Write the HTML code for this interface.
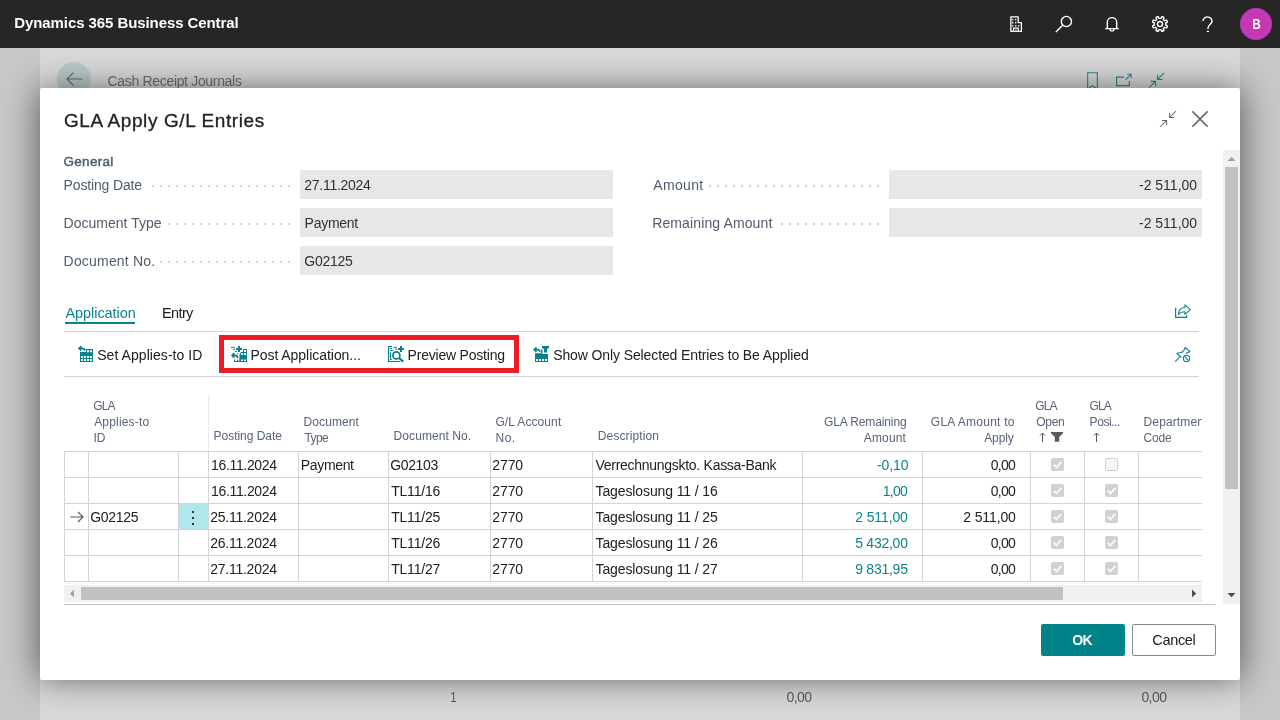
<!DOCTYPE html>
<html lang="en">
<head>
<meta charset="utf-8">
<title>GLA Apply G/L Entries - Dynamics 365 Business Central</title>
<style>
*{box-sizing:border-box;margin:0;padding:0}
html,body{width:1280px;height:720px;overflow:hidden}
body{position:relative;background:#c8c8c8;font-family:"Liberation Sans",sans-serif;font-size:14px;color:#212121}
.t{position:absolute;white-space:pre;line-height:1}
.abs{position:absolute}
#topbar{position:absolute;left:0;top:0;width:1280px;height:48px;background:#262626}
#page{position:absolute;left:40px;top:48px;width:1200px;height:672px;background:#d7d7d7;overflow:hidden}
.mg{position:absolute;top:48px;width:40px;height:672px;overflow:hidden}
.caster{position:absolute;width:1200px;height:592px;border-radius:2px}
#dialog{position:absolute;left:40px;top:88px;width:1200px;height:592px;background:#fff;border-radius:2px}
#layer,#layer2,#topbar{will-change:transform}
#layer{position:absolute;left:0;top:0;width:1280px;height:720px}
.field{position:absolute;height:29px;width:313px;background:#e6e7e8}
.dots{position:absolute;height:2px;background-image:linear-gradient(90deg,#d2d2d2 0,#d2d2d2 2px,transparent 2px);background-size:8px 2px;background-repeat:repeat-x}
.hl{position:absolute;height:1px;background:#d3d4da}
.vl{position:absolute;width:1px;background:#d3d4da}
.cb{position:absolute;width:13px;height:13px;border-radius:2px;background:#d1d1d1}
.cb.off{background:#f6f6f6;border:1px solid #d0d0d0}
.cb svg{position:absolute;left:0;top:0}
svg{position:absolute;overflow:visible}
</style>
</head>
<body>
<div id="topbar">
<!-- company icon -->
<svg style="left:1009px;top:15px" width="14" height="18" viewBox="0 0 14 18"><path d="M1.85 1.85H9.2V7.6h3.2v8.8H1.85z" fill="none" stroke="#fff" stroke-width="1.3" stroke-linejoin="round"/><g fill="#e6e6e6"><circle cx="3.7" cy="4.6" r="0.85"/><circle cx="6.7" cy="4.6" r="0.85"/><circle cx="3.7" cy="7.7" r="0.85"/><circle cx="6.7" cy="7.7" r="0.85"/><circle cx="3.7" cy="10.8" r="0.85"/><circle cx="6.7" cy="10.8" r="0.85"/><circle cx="9.7" cy="10.8" r="0.85"/></g><path d="M4.5 16.4V13.2h4.8v3.2" fill="none" stroke="#fff" stroke-width="1.2" stroke-linejoin="round"/><path d="M6.9 14.2v2" stroke="#bbb" stroke-width="1.2"/></svg>
<!-- search -->
<svg style="left:1054px;top:14px" width="20" height="20" viewBox="0 0 20 20"><circle cx="12.4" cy="7.5" r="5.1" fill="none" stroke="#fff" stroke-width="1.4"/><path d="M8.7 11.2L1.9 18" stroke="#fff" stroke-width="1.5" fill="none"/></svg>
<!-- bell -->
<svg style="left:1104px;top:15px" width="16" height="18" viewBox="0 0 16 18"><path d="M1.2 13.6h13.6M3.3 13.6V7a4.7 4.4 0 0 1 9.4 0v6.6" fill="none" stroke="#fff" stroke-width="1.4"/><path d="M5.9 14a2.1 2 0 0 0 4.2 0" fill="none" stroke="#fff" stroke-width="1.2"/></svg>
<!-- gear -->
<svg style="left:1150px;top:14px" width="20" height="20" viewBox="-10 -10 20 20"><path d="M5.63 0.89L7.46 1.91L6.63 3.92L4.61 3.35L3.35 4.61L3.92 6.63L1.91 7.46L0.89 5.63L-0.89 5.63L-1.91 7.46L-3.92 6.63L-3.35 4.61L-4.61 3.35L-6.63 3.92L-7.46 1.91L-5.63 0.89L-5.63 -0.89L-7.46 -1.91L-6.63 -3.92L-4.61 -3.35L-3.35 -4.61L-3.92 -6.63L-1.91 -7.46L-0.89 -5.63L0.89 -5.63L1.91 -7.46L3.92 -6.63L3.35 -4.61L4.61 -3.35L6.63 -3.92L7.46 -1.91L5.63 -0.89Z" fill="none" stroke="#fff" stroke-width="1.45" stroke-linejoin="round"/><circle r="2.5" fill="none" stroke="#fff" stroke-width="1.4"/></svg>
<!-- help -->
<svg style="left:1200px;top:14px" width="16" height="20" viewBox="0 0 16 20"><path d="M3 7a4.5 4.1 0 1 1 7.3 3.2C8.3 11.9 7.8 12.8 7.8 14.9" fill="none" stroke="#fff" stroke-width="1.45"/><rect x="6.7" y="16.7" width="2.3" height="1.4" rx="0.5" fill="#fff"/></svg>
<div class="abs" style="left:1240px;top:8px;width:32px;height:32px;border-radius:50%;background:#c239b3"></div>
<span class="t" style="left:14.2px;top:14.8px;font-size:15px;color:#ffffff;font-weight:700;letter-spacing:-0.08px;">Dynamics 365 Business Central</span>
<span class="t" style="left:1251.7px;top:16.9px;font-size:14.2px;color:#ffffff;font-weight:700;transform:scaleX(0.83);transform-origin:1px 0;">B</span>
</div>
<div class="mg" style="left:0"><div class="caster" style="left:40px;top:40px;box-shadow:0 0 36px rgba(0,0,0,.6)"></div></div>
<div class="mg" style="left:1240px"><div class="caster" style="left:-1200px;top:40px;box-shadow:0 0 36px rgba(0,0,0,.6)"></div></div>
<div id="page">
<div class="abs" style="left:17px;top:14px;width:34px;height:34px;border-radius:50%;background:#b8c8c9"></div>
<svg style="left:26px;top:24px" width="17" height="14" viewBox="0 0 17 14"><path d="M16.2 7H1M7.4 0.6L1 7l6.4 6.4" fill="none" stroke="#6a6a6a" stroke-width="1.2"/></svg>
<!-- bookmark / open in new window / collapse -->
<svg style="left:1047px;top:24px" width="12" height="18" viewBox="0 0 12 18"><path d="M0.7 0.7h9.6v16.6L5.5 13.6 0.7 17.3z" fill="none" stroke="#2c858b" stroke-width="1.1"/></svg>
<svg style="left:1075px;top:25px" width="18" height="14" viewBox="0 0 18 14"><path d="M9 4.2H1.6v8.4h12.8V8" fill="none" stroke="#2c858b" stroke-width="1.2"/><path d="M10.5 6.6l5.4-5M12 1.2h4.1v4" fill="none" stroke="#2c858b" stroke-width="1.1"/></svg>
<svg style="left:1108px;top:24px" width="18" height="18" viewBox="0 0 18 18"><path d="M16 1L9.6 7.4M9.6 2.6v4.9h4.9M1.2 15.7l6.3-6.3M2.8 9.4h4.8v4.8" fill="none" stroke="#2c858b" stroke-width="1.1"/></svg>
</div>
<div id="layer">
<span class="t" style="left:107.6px;top:73.7px;font-size:14px;color:#6a6f7b;letter-spacing:-0.33px;">Cash Receipt Journals</span>
<span class="t" style="left:450.1px;top:689.6px;font-size:14px;color:#5a5a5a;transform:scaleX(0.82);transform-origin:1px 0;">1</span>
<span class="t" style="left:786.6px;top:689.6px;font-size:14px;color:#5a5a5a;letter-spacing:-0.60px;">0,00</span>
<span class="t" style="left:1141.4px;top:689.6px;font-size:14px;color:#5a5a5a;letter-spacing:-0.57px;">0,00</span>
</div>
<div class="abs" style="left:40px;top:48px;width:1200px;height:672px;overflow:hidden"><div class="caster" style="left:0;top:40px;box-shadow:0 0 30px rgba(0,0,0,.5)"></div></div>
<div id="dialog"></div>
<div id="layer2" class="abs" style="left:0;top:0;width:1280px;height:720px">
<!-- dialog header icons -->
<svg style="left:1159px;top:110px" width="18" height="18" viewBox="0 0 18 18"><path d="M17 1L10.6 7.4M10.6 2.8v4.7h4.7M1 17l6.6-6.6M2.9 10.4h4.7v4.7" fill="none" stroke="#6a6a6a" stroke-width="1.05"/></svg>
<svg style="left:1192px;top:111px" width="16" height="16" viewBox="0 0 16 16"><path d="M0.4 0.4l15.2 15.2M15.6 0.4L0.4 15.6" fill="none" stroke="#666" stroke-width="1.5"/></svg>
<!-- fields -->
<div class="field" style="left:300px;top:170px"></div>
<div class="field" style="left:300px;top:208px"></div>
<div class="field" style="left:300px;top:246px"></div>
<div class="field" style="left:889px;top:170px"></div>
<div class="field" style="left:889px;top:208px"></div>
<div class="dots" style="left:152px;top:185px;width:138px"></div>
<div class="dots" style="left:168px;top:223px;width:122px"></div>
<div class="dots" style="left:160px;top:261px;width:130px"></div>
<div class="dots" style="left:709px;top:185px;width:170px"></div>
<div class="dots" style="left:781px;top:223px;width:98px"></div>
<!-- vertical scrollbar -->
<div class="abs" style="left:1223px;top:150px;width:17px;height:454px;background:#f1f1f1"></div>
<div class="abs" style="left:1225px;top:167px;width:13px;height:322px;background:#c1c1c1"></div>
<svg style="left:1227px;top:156px" width="9" height="6" viewBox="0 0 9 6"><path d="M0.5 5L4.5 0.8 8.5 5z" fill="#a3a3a3"/></svg>
<svg style="left:1227px;top:592px" width="9" height="6" viewBox="0 0 9 6"><path d="M0.5 1L4.5 5.2 8.5 1z" fill="#505050"/></svg>
<!-- tabs -->
<div class="abs" style="left:65px;top:322px;width:70px;height:2px;background:#0a848c"></div>
<div class="hl" style="left:64px;top:331px;width:1135px"></div>
<div class="hl" style="left:64px;top:376px;width:1135px"></div>
<!-- share icon -->
<svg style="left:1174px;top:304px" width="18" height="15" viewBox="0 0 18 15"><path d="M1.6 3.8v9.5h11V11.2" fill="none" stroke="#0a848c" stroke-width="1.2"/><path d="M4.3 10.4C4.7 6.2 7.4 3.6 11 3.3V0.8l5.4 4.8L11 10.4V7.8C8 7.8 5.9 8.5 4.3 10.4z" fill="none" stroke="#0a848c" stroke-width="1.1" stroke-linejoin="round"/></svg>
<!-- unpin icon -->
<svg style="left:1174px;top:346px" width="18" height="17" viewBox="0 0 18 17"><path d="M7.6 11.7L3 7.5c1.6-0.9 3.2-1.1 4.7-1l2.7-2.8 0.8-2.3 4.7 4.1c-1 0.8-1.8 0.9-2.6 1l-1.3 1.1M6 10.5l-4.8 5.2" fill="none" stroke="#0a848c" stroke-width="1.1" stroke-linejoin="round"/><circle cx="12.5" cy="12.4" r="3.1" fill="none" stroke="#0a848c" stroke-width="1.1"/><path d="M10.3 10.2l4.4 4.4" stroke="#0a848c" stroke-width="1.1"/></svg>
<!-- toolbar icons -->
<!-- Set Applies-to ID icon -->
<svg style="left:77px;top:345px" width="17" height="18" viewBox="0 0 17 18"><path d="M3 7.1h6V4h7v13H3z" fill="#03828b"/><path d="M10 5.3h2v1.9h-2zM13 5.3h2v1.9h-2zM4 11h2v2H4zM7 11h2v2H7zM10 11h2v2h-2zM13 11h2v2h-2zM4 14h2v2H4zM7 14h2v2H7zM10 14h2v2h-2zM13 14h2v2h-2z" fill="#fff"/><path d="M7.8 5.8C7.8 4 6.8 3.4 5.2 3.4H2.4M4.3 1.2L2 3.4l2.3 2.2" fill="none" stroke="#03828b" stroke-width="1.6"/></svg>
<!-- Post Application icon -->
<svg style="left:231px;top:345px" width="17" height="18" viewBox="0 0 17 18"><path d="M12 4h4v13H3v-2.6h1v1.5h2v-1.5h1v1.5h1.2L8.6 10V8.4h1V7H12z" fill="#03828b"/><path d="M13 5.1h2V7h-2zM10 8.1h2V10h-2zM13 8.1h2V10h-2zM10 14.4h2v1.7h-2zM13 14.4h2v1.7h-2z" fill="#fff"/><path d="M8 0.9v6M5 3.9h6" stroke="#03828b" stroke-width="2" fill="none"/><path d="M0 2.4h4M2 4.4h2M4 6.4h2" stroke="#03828b" stroke-width="1" fill="none"/><circle cx="6.6" cy="8.5" r="0.6" fill="#03828b"/><path d="M1.6 10.4H4.2c1.6 0 2.4 1 2.4 2.6M3.4 8.2L1.1 10.4l2.3 2.2" fill="none" stroke="#03828b" stroke-width="1.6"/></svg>
<!-- Preview Posting icon -->
<svg style="left:388px;top:345px" width="17" height="18" viewBox="0 0 17 18"><path d="M4 1.5H0.6v15h11" fill="none" stroke="#03828b" stroke-width="1.2"/><path d="M2 3.4h2M5.3 2.4H9M7 4.4h2M2 5.4h3.5M2.5 7.3v7.2H4" stroke="#03828b" stroke-width="1" fill="none"/><circle cx="8.4" cy="10.4" r="3.5" fill="#fff" stroke="#03828b" stroke-width="1.7"/><path d="M11 13l4.2 3.6" stroke="#03828b" stroke-width="2.2" fill="none"/><path d="M13 0.9v6M10 3.9h6" stroke="#03828b" stroke-width="2" fill="none"/></svg>
<!-- Show Only Selected icon -->
<svg style="left:533px;top:345px" width="17" height="18" viewBox="0 0 17 18"><path d="M2 8.2h7.5V9H15v8H2z" fill="#03828b"/><path d="M3 14h2v2H3zM6 14h2v2H6zM9 14h2v2H9zM12 14h2v2h-2z" fill="#fff"/><path d="M9 1h7v1.6l-2 2v3h-3v-3l-2-2z" fill="#03828b"/><path d="M1.6 4.6h2.8c1.6 0 2.4 0.8 2.4 2.4M3.5 2.4L1.2 4.6l2.3 2.2" fill="none" stroke="#03828b" stroke-width="1.6"/><path d="M8.8 4.3v4.2" stroke="#03828b" stroke-width="1.4" fill="none"/></svg>

<!-- red highlight -->
<div class="abs" style="left:219px;top:335px;width:300px;height:38px;border:5px solid #ed1c24"></div>
<!-- table -->
<div id="grid" class="abs" style="left:64px;top:395px;width:1138px;height:187px;overflow:hidden">
<div class="vl" style="left:144px;top:0;height:56px;background:#e9eaec"></div>
<div class="hl" style="left:0;top:56px;width:1138px"></div>
<div class="hl" style="left:0;top:82px;width:1138px"></div>
<div class="hl" style="left:0;top:108px;width:1138px"></div>
<div class="hl" style="left:0;top:134px;width:1138px"></div>
<div class="hl" style="left:0;top:160px;width:1138px"></div>
<div class="hl" style="left:0;top:186px;width:1138px"></div>
<div class="vl" style="left:0;top:56px;height:131px"></div>
<div class="vl" style="left:24px;top:56px;height:131px"></div>
<div class="vl" style="left:114px;top:56px;height:131px"></div>
<div class="vl" style="left:144px;top:56px;height:131px"></div>
<div class="vl" style="left:234px;top:56px;height:131px"></div>
<div class="vl" style="left:324px;top:56px;height:131px"></div>
<div class="vl" style="left:426px;top:56px;height:131px"></div>
<div class="vl" style="left:528px;top:56px;height:131px"></div>
<div class="vl" style="left:738px;top:56px;height:131px"></div>
<div class="vl" style="left:858px;top:56px;height:131px"></div>
<div class="vl" style="left:966px;top:56px;height:131px"></div>
<div class="vl" style="left:1020px;top:56px;height:131px"></div>
<div class="vl" style="left:1074px;top:56px;height:131px"></div>
<div class="abs" style="left:115px;top:109px;width:29px;height:25px;background:#b1e6ea"></div>
<div class="abs" style="left:128px;top:116px;width:2px;height:2px;background:#333;box-shadow:0 6px 0 #333,0 12px 0 #333"></div>
</div>
<div class="abs" style="left:0;top:0;width:1202px;height:720px;overflow:hidden">
<span class="t" style="left:1143.6px;top:415.7px;font-size:12px;color:#566379;letter-spacing:0.11px;">Departmen</span>
</div>
<!-- row arrow -->
<svg style="left:70px;top:511px" width="14" height="12" viewBox="0 0 14 12"><path d="M0.3 6h12.5M8 1l5 5-5 5" fill="none" stroke="#555" stroke-width="1.1"/></svg>
<!-- sort arrows + filter -->
<svg style="left:1039px;top:432px" width="7" height="10" viewBox="0 0 7 10"><path d="M3.5 10V1M1 3.6L3.5 1l2.5 2.6" fill="none" stroke="#555" stroke-width="1"/></svg>
<svg style="left:1093px;top:432px" width="7" height="10" viewBox="0 0 7 10"><path d="M3.5 10V1M1 3.6L3.5 1l2.5 2.6" fill="none" stroke="#555" stroke-width="1"/></svg>
<svg style="left:1051px;top:432px" width="12" height="10" viewBox="0 0 12 10"><path d="M0 0h12v1.2L8.2 5v4.8H3.8V5L0 1.2z" fill="#5a5a5a"/></svg>
<!-- checkboxes -->
<div class="cb" style="left:1051px;top:458px"><svg width="13" height="13" viewBox="0 0 13 13"><path d="M2.8 6.8l2.6 2.6 5-5.6" fill="none" stroke="#f8f8f8" stroke-width="2"/></svg></div>
<div class="cb off" style="left:1105px;top:458px"></div>
<div class="cb" style="left:1051px;top:484px"><svg width="13" height="13" viewBox="0 0 13 13"><path d="M2.8 6.8l2.6 2.6 5-5.6" fill="none" stroke="#f8f8f8" stroke-width="2"/></svg></div>
<div class="cb" style="left:1105px;top:484px"><svg width="13" height="13" viewBox="0 0 13 13"><path d="M2.8 6.8l2.6 2.6 5-5.6" fill="none" stroke="#f8f8f8" stroke-width="2"/></svg></div>
<div class="cb" style="left:1051px;top:510px"><svg width="13" height="13" viewBox="0 0 13 13"><path d="M2.8 6.8l2.6 2.6 5-5.6" fill="none" stroke="#f8f8f8" stroke-width="2"/></svg></div>
<div class="cb" style="left:1105px;top:510px"><svg width="13" height="13" viewBox="0 0 13 13"><path d="M2.8 6.8l2.6 2.6 5-5.6" fill="none" stroke="#f8f8f8" stroke-width="2"/></svg></div>
<div class="cb" style="left:1051px;top:536px"><svg width="13" height="13" viewBox="0 0 13 13"><path d="M2.8 6.8l2.6 2.6 5-5.6" fill="none" stroke="#f8f8f8" stroke-width="2"/></svg></div>
<div class="cb" style="left:1105px;top:536px"><svg width="13" height="13" viewBox="0 0 13 13"><path d="M2.8 6.8l2.6 2.6 5-5.6" fill="none" stroke="#f8f8f8" stroke-width="2"/></svg></div>
<div class="cb" style="left:1051px;top:562px"><svg width="13" height="13" viewBox="0 0 13 13"><path d="M2.8 6.8l2.6 2.6 5-5.6" fill="none" stroke="#f8f8f8" stroke-width="2"/></svg></div>
<div class="cb" style="left:1105px;top:562px"><svg width="13" height="13" viewBox="0 0 13 13"><path d="M2.8 6.8l2.6 2.6 5-5.6" fill="none" stroke="#f8f8f8" stroke-width="2"/></svg></div>
<!-- horizontal scrollbar -->
<div class="abs" style="left:64px;top:585px;width:1138px;height:17px;background:#f1f1f1"></div>
<div class="abs" style="left:81px;top:587px;width:982px;height:13px;background:#c1c1c1"></div>
<svg style="left:69px;top:589px" width="6" height="9" viewBox="0 0 6 9"><path d="M5 0.5L0.8 4.5 5 8.5z" fill="#a3a3a3"/></svg>
<svg style="left:1191px;top:589px" width="6" height="9" viewBox="0 0 6 9"><path d="M1 0.5L5.2 4.5 1 8.5z" fill="#505050"/></svg>
<div class="hl" style="left:64px;top:583px;width:1138px;background:#f6f7f9"></div>
<div class="hl" style="left:64px;top:604px;width:1152px;background:#c8c8c8"></div>
<!-- buttons -->
<div class="abs" style="left:1041px;top:624px;width:84px;height:32px;border-radius:2px;background:#00848a"></div>
<div class="abs" style="left:1132px;top:624px;width:84px;height:32px;border-radius:2px;background:#fff;border:1px solid #8a8a8a"></div>
<span class="t" style="left:63.9px;top:111.1px;font-size:19px;color:#212121;-webkit-text-stroke:0.3px #212121;letter-spacing:0.60px;">GLA Apply G/L Entries</span>
<span class="t" style="left:63.5px;top:155.3px;font-size:13.5px;color:#505c6d;-webkit-text-stroke:0.45px #505c6d;letter-spacing:0.30px;">General</span>
<span class="t" style="left:63.6px;top:177.7px;font-size:14px;color:#505c6d;letter-spacing:-0.15px;">Posting Date</span>
<span class="t" style="left:63.6px;top:215.7px;font-size:14px;color:#505c6d;letter-spacing:0.01px;">Document Type</span>
<span class="t" style="left:63.6px;top:253.7px;font-size:14px;color:#505c6d;letter-spacing:0.19px;">Document No.</span>
<span class="t" style="left:653.2px;top:177.7px;font-size:14px;color:#505c6d;letter-spacing:0.36px;">Amount</span>
<span class="t" style="left:652.2px;top:215.7px;font-size:14px;color:#505c6d;letter-spacing:0.12px;">Remaining Amount</span>
<span class="t" style="left:304.3px;top:177.8px;font-size:14px;color:#323130;letter-spacing:-0.27px;">27.11.2024</span>
<span class="t" style="left:304.6px;top:215.8px;font-size:14px;color:#323130;letter-spacing:-0.27px;">Payment</span>
<span class="t" style="left:304.3px;top:253.8px;font-size:14px;color:#323130;letter-spacing:-0.26px;">G02125</span>
<span class="t" style="left:1139.0px;top:177.8px;font-size:14px;color:#323130;">-2 511,00</span>
<span class="t" style="left:1139.0px;top:215.8px;font-size:14px;color:#323130;">-2 511,00</span>
<span class="t" style="left:65.4px;top:306.1px;font-size:14.5px;color:#0a848c;letter-spacing:-0.05px;">Application</span>
<span class="t" style="left:162.0px;top:306.1px;font-size:14.5px;color:#212121;letter-spacing:-0.62px;">Entry</span>
<span class="t" style="left:97.2px;top:347.8px;font-size:14px;color:#212121;letter-spacing:0.06px;">Set Applies-to ID</span>
<span class="t" style="left:250.4px;top:347.8px;font-size:14px;color:#212121;letter-spacing:-0.04px;">Post Application...</span>
<span class="t" style="left:407.6px;top:347.8px;font-size:14px;color:#212121;letter-spacing:-0.21px;">Preview Posting</span>
<span class="t" style="left:553.2px;top:347.8px;font-size:14px;color:#212121;letter-spacing:-0.11px;">Show Only Selected Entries to Be Applied</span>
<span class="t" style="left:93.2px;top:399.7px;font-size:12px;color:#566379;letter-spacing:-0.88px;">GLA</span>
<span class="t" style="left:94.2px;top:415.7px;font-size:12px;color:#566379;letter-spacing:0.17px;">Applies-to</span>
<span class="t" style="left:93.6px;top:431.8px;font-size:12px;color:#566379;letter-spacing:-0.10px;">ID</span>
<span class="t" style="left:213.6px;top:430.0px;font-size:12px;color:#566379;letter-spacing:-0.03px;">Posting Date</span>
<span class="t" style="left:303.6px;top:415.7px;font-size:12px;color:#566379;letter-spacing:0.09px;">Document</span>
<span class="t" style="left:304.4px;top:431.8px;font-size:12px;color:#566379;letter-spacing:-0.55px;">Type</span>
<span class="t" style="left:393.6px;top:430.0px;font-size:12px;color:#566379;letter-spacing:0.08px;">Document No.</span>
<span class="t" style="left:495.4px;top:415.7px;font-size:12px;color:#566379;letter-spacing:0.09px;">G/L Account</span>
<span class="t" style="left:495.6px;top:431.8px;font-size:12px;color:#566379;letter-spacing:0.45px;">No.</span>
<span class="t" style="left:597.8px;top:430.0px;font-size:12px;color:#566379;letter-spacing:0.12px;">Description</span>
<span class="t" style="left:824.0px;top:415.7px;font-size:12px;color:#566379;letter-spacing:-0.12px;">GLA Remaining</span>
<span class="t" style="left:863.8px;top:431.8px;font-size:12px;color:#566379;letter-spacing:0.15px;">Amount</span>
<span class="t" style="left:930.8px;top:415.7px;font-size:12px;color:#566379;letter-spacing:0.25px;">GLA Amount to</span>
<span class="t" style="left:984.2px;top:431.8px;font-size:12px;color:#566379;letter-spacing:-0.12px;">Apply</span>
<span class="t" style="left:1035.2px;top:399.7px;font-size:12px;color:#566379;letter-spacing:-0.88px;">GLA</span>
<span class="t" style="left:1036.2px;top:415.7px;font-size:12px;color:#566379;letter-spacing:-0.25px;">Open</span>
<span class="t" style="left:1089.5px;top:399.7px;font-size:12px;color:#566379;letter-spacing:-0.88px;">GLA</span>
<span class="t" style="left:1089.6px;top:415.7px;font-size:12px;color:#566379;letter-spacing:-0.43px;">Posi...</span>
<span class="t" style="left:1143.5px;top:431.8px;font-size:12px;color:#566379;letter-spacing:-0.17px;">Code</span>
<span class="t" style="left:211.0px;top:457.6px;font-size:14px;color:#212121;letter-spacing:-0.33px;">16.11.2024</span>
<span class="t" style="left:300.8px;top:457.6px;font-size:14px;color:#212121;letter-spacing:-0.34px;">Payment</span>
<span class="t" style="left:390.2px;top:457.6px;font-size:14px;color:#212121;letter-spacing:-0.35px;">G02103</span>
<span class="t" style="left:492.3px;top:457.6px;font-size:14px;color:#212121;letter-spacing:-0.10px;">2770</span>
<span class="t" style="left:595.5px;top:457.6px;font-size:14px;color:#212121;letter-spacing:-0.28px;">Verrechnungskto. Kassa-Bank</span>
<span class="t" style="left:877.0px;top:457.6px;font-size:14px;color:#0a848c;letter-spacing:-0.12px;">-0,10</span>
<span class="t" style="left:990.8px;top:457.6px;font-size:14px;color:#212121;letter-spacing:-0.75px;">0,00</span>
<span class="t" style="left:211.0px;top:483.6px;font-size:14px;color:#212121;letter-spacing:-0.33px;">16.11.2024</span>
<span class="t" style="left:391.2px;top:483.6px;font-size:14px;color:#212121;letter-spacing:-0.21px;">TL11/16</span>
<span class="t" style="left:492.3px;top:483.6px;font-size:14px;color:#212121;letter-spacing:-0.10px;">2770</span>
<span class="t" style="left:595.5px;top:483.6px;font-size:14px;color:#212121;letter-spacing:-0.11px;">Tageslosung 11 / 16</span>
<span class="t" style="left:882.8px;top:483.6px;font-size:14px;color:#0a848c;letter-spacing:-0.75px;">1,00</span>
<span class="t" style="left:990.8px;top:483.6px;font-size:14px;color:#212121;letter-spacing:-0.75px;">0,00</span>
<span class="t" style="left:90.2px;top:509.6px;font-size:14px;color:#212121;letter-spacing:-0.31px;">G02125</span>
<span class="t" style="left:210.3px;top:509.6px;font-size:14px;color:#212121;letter-spacing:-0.26px;">25.11.2024</span>
<span class="t" style="left:391.2px;top:509.6px;font-size:14px;color:#212121;letter-spacing:-0.21px;">TL11/25</span>
<span class="t" style="left:492.3px;top:509.6px;font-size:14px;color:#212121;letter-spacing:-0.10px;">2770</span>
<span class="t" style="left:595.5px;top:509.6px;font-size:14px;color:#212121;letter-spacing:-0.11px;">Tageslosung 11 / 25</span>
<span class="t" style="left:855.2px;top:509.6px;font-size:14px;color:#0a848c;letter-spacing:-0.11px;">2 511,00</span>
<span class="t" style="left:963.2px;top:509.6px;font-size:14px;color:#212121;letter-spacing:-0.11px;">2 511,00</span>
<span class="t" style="left:210.3px;top:535.6px;font-size:14px;color:#212121;letter-spacing:-0.26px;">26.11.2024</span>
<span class="t" style="left:391.2px;top:535.6px;font-size:14px;color:#212121;letter-spacing:-0.21px;">TL11/26</span>
<span class="t" style="left:492.3px;top:535.6px;font-size:14px;color:#212121;letter-spacing:-0.10px;">2770</span>
<span class="t" style="left:595.5px;top:535.6px;font-size:14px;color:#212121;letter-spacing:-0.11px;">Tageslosung 11 / 26</span>
<span class="t" style="left:855.2px;top:535.6px;font-size:14px;color:#0a848c;letter-spacing:-0.25px;">5 432,00</span>
<span class="t" style="left:990.8px;top:535.6px;font-size:14px;color:#212121;letter-spacing:-0.75px;">0,00</span>
<span class="t" style="left:210.3px;top:561.6px;font-size:14px;color:#212121;letter-spacing:-0.26px;">27.11.2024</span>
<span class="t" style="left:391.2px;top:561.6px;font-size:14px;color:#212121;letter-spacing:-0.21px;">TL11/27</span>
<span class="t" style="left:492.3px;top:561.6px;font-size:14px;color:#212121;letter-spacing:-0.10px;">2770</span>
<span class="t" style="left:595.5px;top:561.6px;font-size:14px;color:#212121;letter-spacing:-0.11px;">Tageslosung 11 / 27</span>
<span class="t" style="left:855.2px;top:561.6px;font-size:14px;color:#0a848c;letter-spacing:-0.25px;">9 831,95</span>
<span class="t" style="left:990.8px;top:561.6px;font-size:14px;color:#212121;letter-spacing:-0.75px;">0,00</span>
<span class="t" style="left:1072.3px;top:632.6px;font-size:14px;color:#ffffff;font-weight:700;letter-spacing:-0.80px;">OK</span>
<span class="t" style="left:1152.3px;top:632.6px;font-size:14.5px;color:#212121;letter-spacing:-0.32px;">Cancel</span>
</div>
</body>
</html>
